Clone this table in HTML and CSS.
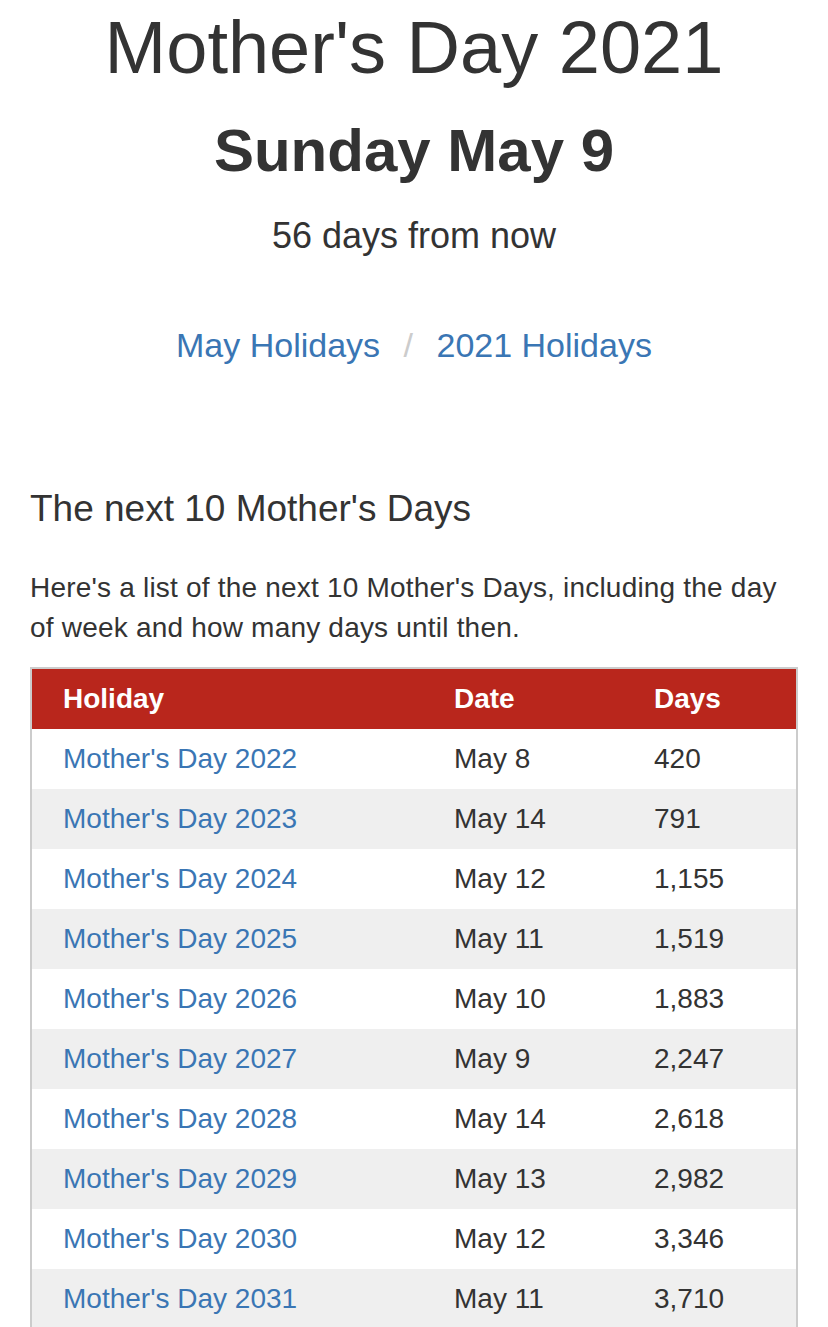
FILE: index.html
```html
<!DOCTYPE html>
<html lang="en">
<head>
    <meta charset="UTF-8">
    <meta name="viewport" content="width=device-width, initial-scale=1.0">
    <title>Mother's Day 2021</title>
    <link rel="stylesheet" href="styles.css">
</head>
<body>
<div class="container">
    <div class="holiday-header">
        <h1>Mother's Day 2021</h1>
        <h2>Sunday May 9</h2>
        <p class="countdown">56 days from now</p>
        <div class="crumbs">
            <a href="#">May Holidays</a>
            <span class="sep">/</span>
            <a href="#">2021 Holidays</a>
        </div>
    </div>

    <h3 class="section-title">The next 10 Mother's Days</h3>
    <p class="intro">Here's a list of the next 10 Mother's Days, including the day of week and how many days until then.</p>

    <table class="holiday-table">
        <thead>
            <tr>
                <th class="col-name">Holiday</th>
                <th class="col-date">Date</th>
                <th>Days</th>
            </tr>
        </thead>
        <tbody>
            <tr><td><a href="#">Mother's Day 2022</a></td><td>May 8</td><td>420</td></tr>
            <tr><td><a href="#">Mother's Day 2023</a></td><td>May 14</td><td>791</td></tr>
            <tr><td><a href="#">Mother's Day 2024</a></td><td>May 12</td><td>1,155</td></tr>
            <tr><td><a href="#">Mother's Day 2025</a></td><td>May 11</td><td>1,519</td></tr>
            <tr><td><a href="#">Mother's Day 2026</a></td><td>May 10</td><td>1,883</td></tr>
            <tr><td><a href="#">Mother's Day 2027</a></td><td>May 9</td><td>2,247</td></tr>
            <tr><td><a href="#">Mother's Day 2028</a></td><td>May 14</td><td>2,618</td></tr>
            <tr><td><a href="#">Mother's Day 2029</a></td><td>May 13</td><td>2,982</td></tr>
            <tr><td><a href="#">Mother's Day 2030</a></td><td>May 12</td><td>3,346</td></tr>
            <tr><td><a href="#">Mother's Day 2031</a></td><td>May 11</td><td>3,710</td></tr>
        </tbody>
    </table>
</div>
</body>
</html>
```

FILE: styles.css
```css
body {
    font-family: "Liberation Sans", Arial, sans-serif;
    color: #333;
    background-color: #fff;
    margin: 0;
    padding: 0;
}

.container {
    padding: 8px 30px 40px;
}

/* Header */
.holiday-header {
    text-align: center;
}

.holiday-header h1 {
    font-size: 74px;
    font-weight: normal;
    line-height: 80px;
    margin: 0;
}

.holiday-header h2 {
    font-size: 60px;
    font-weight: bold;
    line-height: 66px;
    margin: 30px 0 0;
}

.countdown {
    font-size: 36px;
    line-height: 52px;
    margin: 26px 0 0;
}

.crumbs {
    font-size: 34px;
    line-height: 48px;
    margin-top: 59px;
}

.crumbs a {
    color: #3a76b4;
    text-decoration: none;
}

.crumbs .sep {
    color: #ccc;
    padding: 0 14px;
}

/* List section */
.section-title {
    font-size: 37px;
    font-weight: normal;
    line-height: 40px;
    margin: 120px 0 0;
}

.intro {
    font-size: 28px;
    line-height: 40px;
    letter-spacing: 0.2px;
    margin: 39px 0 0;
    padding-right: 14px;
}

.holiday-table {
    width: 100%;
    table-layout: fixed;
    margin-top: 19px;
    border: 2px solid #ccc;
    border-collapse: collapse;
    font-size: 28px;
    line-height: 40px;
}

.holiday-table th,
.holiday-table td {
    box-sizing: border-box;
    text-align: left;
    padding: 10px 0 10px 31px;
}

.holiday-table th {
    background-color: #b9261c;
    color: #fff;
    font-weight: bold;
}

.holiday-table .col-name {
    width: 392px;
}

.holiday-table .col-date {
    width: 200px;
}

.holiday-table tbody tr:nth-child(even) {
    background-color: #efefef;
}

.holiday-table a {
    color: #3a76b4;
    text-decoration: none;
}
```
